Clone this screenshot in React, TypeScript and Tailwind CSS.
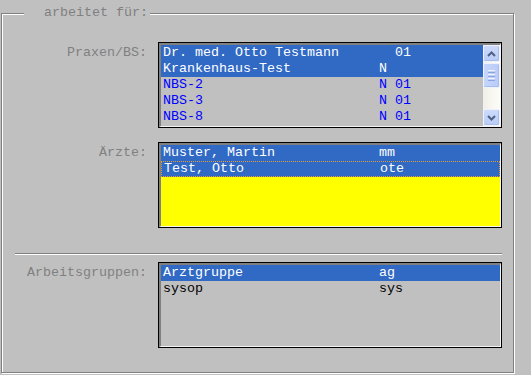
import React from "react";

type Row = { name: string; code: string; selected?: boolean; focus?: boolean };

const PRAXEN: Row[] = [
  { name: "Dr. med. Otto Testmann", code: "  01", selected: true },
  { name: "Krankenhaus-Test", code: "N", selected: true },
  { name: "NBS-2", code: "N 01" },
  { name: "NBS-3", code: "N 01" },
  { name: "NBS-8", code: "N 01" },
];

const AERZTE: Row[] = [
  { name: "Muster, Martin", code: "mm", selected: true },
  { name: "Test, Otto", code: "ote", selected: true, focus: true },
];

const GRUPPEN: Row[] = [
  { name: "Arztgruppe", code: "ag", selected: true },
  { name: "sysop", code: "sys" },
];

function Chevron({ down }: { down?: boolean }) {
  return (
    <svg width="9" height="6" viewBox="0 0 9 6">
      <polyline
        points={down ? "1,1 4.5,4.5 8,1" : "1,5 4.5,1.5 8,5"}
        fill="none"
        stroke="#4d6185"
        strokeWidth="2"
      />
    </svg>
  );
}

function ScrollButton({ down }: { down?: boolean }) {
  return (
    <div className="h-[17px] rounded-[2px] border border-[#eef2fd] bg-gradient-to-b from-[#cddafc] to-[#b9cbf7] flex items-center justify-center shadow-[inset_-1px_-1px_0_#a9bde9]">
      <Chevron down={down} />
    </div>
  );
}

function ScrollBar() {
  return (
    <div className="w-[17px] flex flex-col bg-gradient-to-r from-[#f1efe6] to-[#fdfdf9]">
      <ScrollButton />
      <div className="mt-[1px] h-[25px] rounded-[2px] border border-[#eef2fd] bg-gradient-to-r from-[#c6d6fc] to-[#b9cbf7] flex flex-col items-center justify-center gap-[1px] shadow-[inset_-1px_-1px_0_#a9bde9]">
        <div className="w-[7px] h-[1px] bg-[#eef3fe]" />
        <div className="w-[7px] h-[1px] bg-[#8da4de]" />
        <div className="w-[7px] h-[1px] bg-[#eef3fe]" />
        <div className="w-[7px] h-[1px] bg-[#8da4de]" />
        <div className="w-[7px] h-[1px] bg-[#eef3fe]" />
        <div className="w-[7px] h-[1px] bg-[#8da4de]" />
      </div>
      <div className="flex-1" />
      <ScrollButton down />
    </div>
  );
}

function ListBox({
  rows,
  bg,
  text,
  scroll,
}: {
  rows: Row[];
  bg: string;
  text: string;
  scroll?: boolean;
}) {
  return (
    <div className="w-[344px] border border-black">
      <div className="h-[84px] border-t-2 border-l-2 border-r border-b border-t-[#808080] border-l-[#808080] border-r-[#f4f4f4] border-b-[#f4f4f4] flex">
        <div className={`flex-1 flex flex-col ${bg}`}>
          {rows.map((r) => (
            <div
              key={r.name}
              className={`h-[16px] flex items-center pl-[2px] whitespace-pre leading-[16px] ${
                r.selected ? "bg-[#316ac5] text-white" : text
              } ${r.focus ? "border border-dotted border-[#e39a3a] pl-[1px]" : ""}`}
            >
              <span className="w-[216px] shrink-0">{r.name}</span>
              <span>{r.code}</span>
            </div>
          ))}
        </div>
        {scroll && <ScrollBar />}
      </div>
    </div>
  );
}

function Field({ label, children }: { label: string; children: React.ReactNode }) {
  return (
    <div className="flex gap-[11px]">
      <div className="w-[145px] text-right pt-[3px] leading-[16px] text-[#808080]">{label}</div>
      {children}
    </div>
  );
}

export default function App() {
  return (
    <div className="w-[531px] h-[375px] bg-[#c0c0c0] pt-[13px] pl-[1px] font-['Liberation_Mono','Courier_New',monospace] text-[13.333px] overflow-hidden">
      <div className="relative w-[513px] h-[360px] border border-[#808080] shadow-[inset_1px_1px_0_#fff,1px_1px_0_#fff] pt-[28px]">
        <span className="absolute left-[22px] top-[-9px] bg-[#c0c0c0] pl-[20px] pr-[2px] leading-[16px] text-[#808080]">
          arbeitet für:
        </span>

        <Field label="Praxen/BS:">
          <ListBox rows={PRAXEN} bg="bg-[#c0c0c0]" text="text-[#0000ff]" scroll />
        </Field>

        <div className="mt-[14px]">
          <Field label="Ärzte:">
            <ListBox rows={AERZTE} bg="bg-[#ffff00]" text="text-black" />
          </Field>
        </div>

        <div className="mt-[25px] ml-[13px] w-[487px] h-[2px] border-t border-b border-t-[#808080] border-b-white" />

        <div className="mt-[7px]">
          <Field label="Arbeitsgruppen:">
            <ListBox rows={GRUPPEN} bg="bg-[#c0c0c0]" text="text-black" />
          </Field>
        </div>
      </div>
    </div>
  );
}
